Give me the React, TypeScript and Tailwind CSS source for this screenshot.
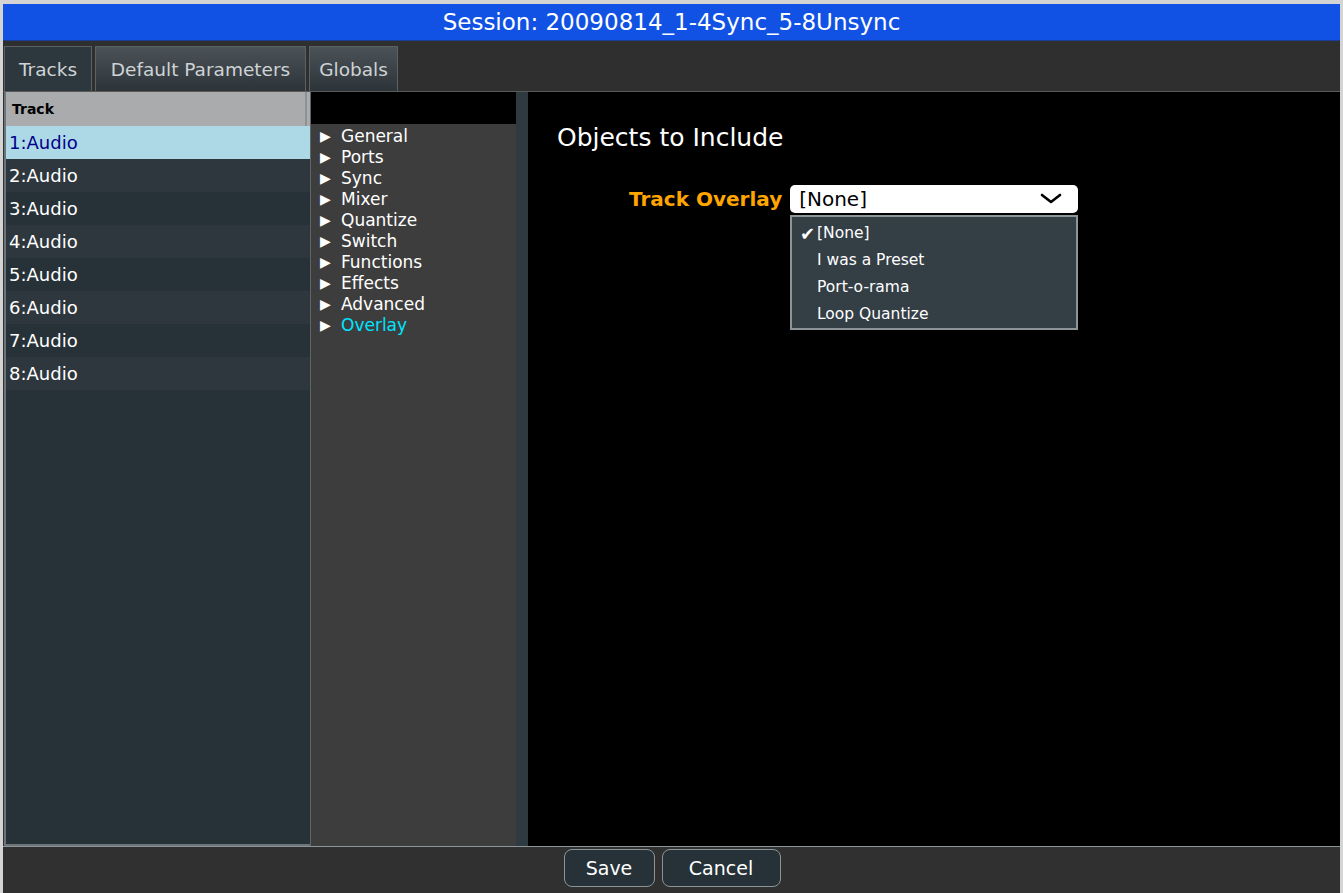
import React from "react";

const tracks = ["1:Audio", "2:Audio", "3:Audio", "4:Audio", "5:Audio", "6:Audio", "7:Audio", "8:Audio"];
const sections = ["General", "Ports", "Sync", "Mixer", "Quantize", "Switch", "Functions", "Effects", "Advanced", "Overlay"];
const options = ["[None]", "I was a Preset", "Port-o-rama", "Loop Quantize"];

const App: React.FC = () => {
  return (
    <div
      className="w-[1343px] h-[893px] bg-[#d4d4d4] pt-[4px] pr-[3px] pl-[3px] overflow-hidden"
      style={{ fontFamily: '"DejaVu Sans", Verdana, sans-serif' }}
    >
      <div className="flex flex-col h-full bg-[#303030]">
        {/* Title */}
        <div className="h-[37px] bg-[#1152e4] flex items-center justify-center text-white text-[23px] border-b border-[#1a3d9a]">
          Session: 20090814_1-4Sync_5-8Unsync
        </div>

        {/* Tabs */}
        <div className="h-[51px] flex items-end gap-[3px] pl-[1px] bg-[#2f2f2f] border-b border-[#5a5a5a]">
          <Tab label="Tracks" active w="w-[88px]" />
          <Tab label="Default Parameters" w="w-[211px]" />
          <Tab label="Globals" w="w-[89px]" />
        </div>

        {/* Body */}
        <div className="flex-1 flex min-h-0 border-b border-[#8c9699]">
          {/* Track list */}
          <div className="w-[306px] ml-[1px] flex flex-col bg-[#263238] border-l-2 border-b-2 border-[#6c767a]">
            <div className="h-[34px] flex bg-[#a9abad]">
              <div className="flex-1 flex items-center pl-[6px] text-[14px] font-bold text-black border-r-2 border-[#8e9092]">
                Track
              </div>
              <div className="w-[3px]" />
            </div>
            {tracks.map((t, i) => (
              <div
                key={t}
                className={`h-[33px] flex items-center pl-[3px] text-[18px] ${
                  i === 0
                    ? "bg-[#add8e6] text-[#00008b]"
                    : i % 2 === 1
                    ? "bg-[#2e373d] text-white"
                    : "bg-[#273238] text-white"
                }`}
              >
                {t}
              </div>
            ))}
          </div>

          {/* Section tree */}
          <div className="w-[206px] flex flex-col bg-[#3d3d3d] border-l border-[#5c6466]">
            <div className="h-[32px] bg-black" />
            <div className="pt-[2px] pl-[9px]">
              {sections.map((s) => (
                <div key={s} className="h-[21px] flex items-center text-[17px]">
                  <span className="text-white text-[14px] w-[21px]">&#9654;</span>
                  <span className={s === "Overlay" ? "text-[#00e5ff]" : "text-white"}>{s}</span>
                </div>
              ))}
            </div>
          </div>

          <div className="w-[12px] bg-[#2f3a40]" />

          {/* Editor */}
          <div className="flex-1 bg-black relative">
            <div className="pt-[27px] pl-[29px] text-white text-[25px]">Objects to Include</div>
            <div className="flex items-center mt-[27px] ml-[101px]">
              <span className="text-[#ffa500] font-bold text-[20px] mr-[8px]">Track Overlay</span>
              <div className="w-[288px] h-[28px] bg-white rounded-[5px] flex items-center justify-between pl-[9px] pr-[16px] text-black text-[20px]">
                <span>[None]</span>
                <svg width="22" height="12" viewBox="0 0 22 12">
                  <path d="M2 2 L11 9 L20 2" fill="none" stroke="black" strokeWidth="2.6" strokeLinecap="round" strokeLinejoin="round" />
                </svg>
              </div>
            </div>
            <div className="absolute left-[262px] top-[123px] w-[288px] bg-[#343e45] border-2 border-[#8d9598] pt-[3px] pb-[0px]">
              {options.map((o, i) => (
                <div key={o} className="h-[27px] flex items-center text-white text-[15.5px]">
                  <span className="w-[25px] text-right pr-[2px] text-[18px] font-bold">{i === 0 ? "✔" : ""}</span>
                  <span>{o}</span>
                </div>
              ))}
            </div>
          </div>
        </div>

        {/* Footer */}
        <div className="h-[46px] flex items-start justify-center gap-[7px] pt-[2px] pl-[1px] bg-[#303030]">
          <button className="w-[91px] h-[38px] bg-[#263238] border border-[#8b9595] rounded-[8px] text-white text-[19px]">
            Save
          </button>
          <button className="w-[119px] h-[38px] bg-[#263238] border border-[#8b9595] rounded-[8px] text-white text-[19px]">
            Cancel
          </button>
        </div>
      </div>
    </div>
  );
};

const Tab: React.FC<{ label: string; active?: boolean; w: string }> = ({ label, active, w }) => (
  <div
    className={`${w} h-[45px] flex items-center justify-center pt-[2px] text-[18.5px] text-[#cfd3d5] border border-[#5b6266] border-b-0 ${
      active ? "bg-[#2d383e]" : "bg-gradient-to-b from-[#4c5358] to-[#2c3439]"
    }`}
  >
    {label}
  </div>
);

export default App;
